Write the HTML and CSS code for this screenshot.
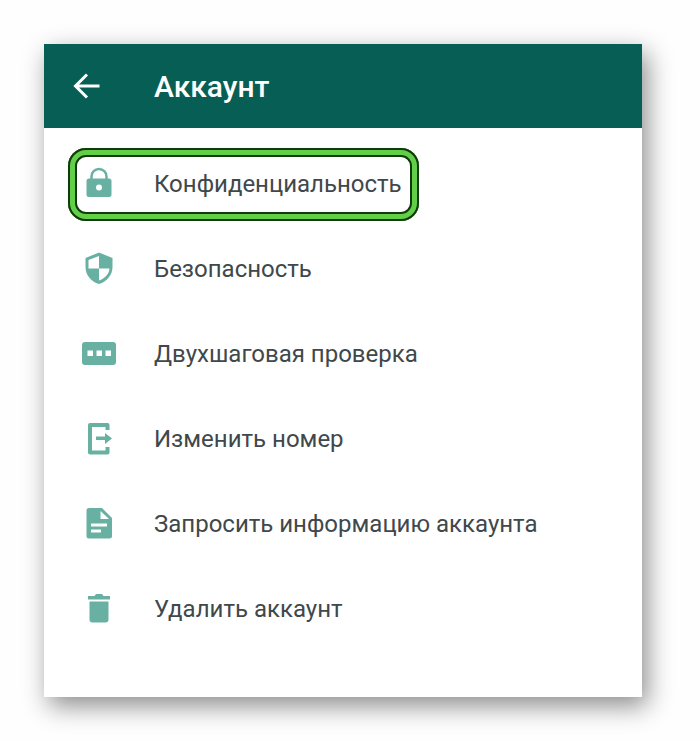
FILE: index.html
```html
<!DOCTYPE html>
<html lang="ru">
<head>
  <meta charset="UTF-8">
  <meta name="viewport" content="width=device-width, initial-scale=1">
  <title>Аккаунт</title>
  <link rel="stylesheet" href="styles.css">
</head>
<body>
  <main class="card">
    <header class="header">
      <button class="back" type="button" aria-label="Назад">
        <svg width="32" height="32" viewBox="0 0 32 32" fill="none" stroke="currentColor" stroke-width="3">
          <path d="M28.500 16H5M16 4.500L4.500 16L16 27.500"/>
        </svg>
      </button>
      <h1 class="title">Аккаунт</h1>
    </header>

    <!-- Account settings -->
    <nav class="menu">
      <a class="item item-active" href="#privacy">
        <svg class="icon" viewBox="0 0 36 36">
          <path d="M10.500 15V10.500a7.500 7.500 0 0 1 15 0V15" fill="none" stroke="currentColor" stroke-width="2.500"/>
          <path fill-rule="evenodd" d="M8 12.500H28a2.500 2.500 0 0 1 2.500 2.500V28.500a2.500 2.500 0 0 1-2.500 2.500H8A2.500 2.500 0 0 1 5.500 28.500V15A2.500 2.500 0 0 1 8 12.500ZM18 18.500a3 3 0 1 0 0 6a3 3 0 0 0 0-6Z"/>
        </svg>
        <span>Конфиденциальность</span>
      </a>
      <a class="item" href="#security">
        <svg class="icon" viewBox="0 0 36 36">
          <path fill-rule="evenodd" d="M18 1.500L31.500 7V16C31.500 24 26 30.500 18 33C10 30.500 4.500 24 4.500 16V7ZM18 5L7.500 9V17.500H18ZM18 17.500V29.500C24 27.500 28 23 28.500 17.500Z"/>
        </svg>
        <span>Безопасность</span>
      </a>
      <a class="item" href="#two-step">
        <svg class="icon" viewBox="0 0 36 36">
          <path fill-rule="evenodd" d="M4 6H32a3 3 0 0 1 3 3V26a3 3 0 0 1-3 3H4a3 3 0 0 1-3-3V9A3 3 0 0 1 4 6ZM6.500 14.500V20H12V14.500ZM15.500 14.500V20H21V14.500ZM24.500 14.500V20H30V14.500Z"/>
        </svg>
        <span>Двухшаговая проверка</span>
      </a>
      <a class="item" href="#change-number">
        <svg class="icon" viewBox="0 0 36 36">
          <path d="M26.500 9V4H9V31.500H26.500V26" fill="none" stroke="currentColor" stroke-width="4" stroke-linejoin="round"/>
          <path d="M15 15.500H24V12L31 17.500L24 23V19H15Z"/>
        </svg>
        <span>Изменить номер</span>
      </a>
      <a class="item" href="#request-info">
        <svg class="icon" viewBox="0 0 36 36">
          <path fill-rule="evenodd" d="M8 2H21L31 12V30a2.500 2.500 0 0 1-2.500 2.500H8A2.500 2.500 0 0 1 5.500 30V4.500A2.500 2.500 0 0 1 8 2ZM19.500 5V13H28ZM10 17.500V20.500H26V17.500ZM10 23.500V26.500H20V23.500Z"/>
        </svg>
        <span>Запросить информацию аккаунта</span>
      </a>
      <a class="item" href="#delete">
        <svg class="icon" viewBox="0 0 36 36">
          <path d="M7 5H13.500L15 3H21L22.500 5H29V8.500H7ZM8.500 10.500H27.500V28.500a3 3 0 0 1-3 3H11.500a3 3 0 0 1-3-3Z"/>
        </svg>
        <span>Удалить аккаунт</span>
      </a>
    </nav>
  </main>
</body>
</html>
```

FILE: styles.css
```css
* {
  box-sizing: border-box;
}

body {
  margin: 0;
  padding: 44px 58px 44px 44px;
  background: #fefefe;
  font-family: Roboto, "Noto Sans", sans-serif;
}

.card {
  background: #fff;
  box-shadow: 5px 9px 24px rgba(0, 0, 0, 0.45);
}

.header {
  display: flex;
  align-items: center;
  gap: 51px;
  height: 84px;
  padding: 0 27px;
  background: #075e54;
  color: #fff;
}

.back {
  display: flex;
  padding: 0;
  border: 0;
  background: none;
  color: inherit;
  cursor: pointer;
}

.title {
  margin: 0;
  font-size: 30px;
  font-weight: 500;
}

.menu {
  display: flex;
  flex-direction: column;
  align-items: flex-start;
  gap: 12px;
  padding: 20px 24px 51px;
}

.item {
  display: flex;
  align-items: center;
  gap: 37px;
  min-height: 73px;
  padding: 0 17px 2px 13px;
  color: #3f484b;
  font-size: 24px;
  line-height: 32px;
  text-decoration: none;
}

/* Green frame with a dark line on both sides */
.item-active {
  border-radius: 18px;
  box-shadow: inset 0 0 0 2px #123a0c, inset 0 0 0 7px #62cf49, inset 0 0 0 9px #123a0c;
}

.icon {
  flex: none;
  width: 36px;
  height: 36px;
  color: #68b1a2;
  fill: currentColor;
}
```
